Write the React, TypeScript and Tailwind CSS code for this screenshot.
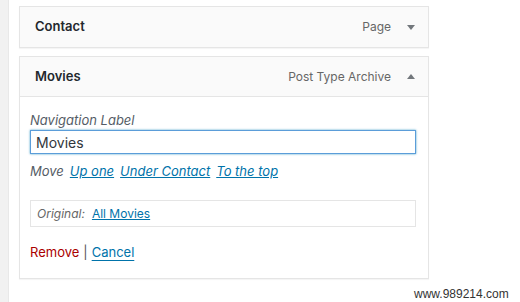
import React from "react";

const Arrow: React.FC<{ up?: boolean }> = ({ up }) => (
  <svg width="8" height="5" viewBox="0 0 8 5" className="text-[#72777c]">
    {up ? <path d="M0 5 L4 0 L8 5 Z" fill="currentColor" /> : <path d="M0 0 L8 0 L4 5 Z" fill="currentColor" />}
  </svg>
);

const ItemHeader: React.FC<{ title: string; type: string; up?: boolean; open?: boolean }> = ({
  title,
  type,
  up,
  open,
}) => (
  <div
    className={`flex items-center h-[40px] pl-[15px] pr-[13px] bg-[#fafafa] ${
      open ? "border-b border-[#e5e5e5]" : ""
    }`}
  >
    <span className="text-[13px] font-semibold text-[#23282d]">{title}</span>
    <span className="ml-auto text-[12px] text-[#666]">{type}</span>
    <span className="ml-[16px] w-[8px] flex items-center">
      <Arrow up={up} />
    </span>
  </div>
);

const App: React.FC = () => {
  return (
    <div
      className="relative flex w-[520px] h-[302px] bg-white overflow-hidden"
      style={{ fontFamily: "Inter, 'Noto Sans', sans-serif" }}
    >
      {/* left admin strip */}
      <div className="w-[9px] h-full bg-[#f1f1f1] border-r border-[#e8e8e8]" />

      <div className="flex flex-col pl-[10px] pt-[6px] w-[420px]">
        {/* Contact item */}
        <div className="border border-[#e5e5e5] shadow-[0_1px_1px_rgba(0,0,0,0.04)]">
          <ItemHeader title="Contact" type="Page" />
        </div>

        {/* Movies item */}
        <div className="mt-[8px] border border-[#e5e5e5] shadow-[0_1px_1px_rgba(0,0,0,0.04)] bg-white">
          <ItemHeader title="Movies" type="Post Type Archive" up open />

          <div className="pl-[10px] pr-[12px] pt-[15px] pb-[17px]">
            <div className="text-[13px] italic text-[#555d66] leading-[16px]">Navigation Label</div>
            <input
              readOnly
              value="Movies"
              className="mt-[2px] w-full h-[24px] px-[5px] text-[14px] text-[#32373c] border border-[#5b9dd9] shadow-[0_0_2px_rgba(30,140,190,0.8)] outline-none"
            />
            <div className="mt-[9px] flex items-center gap-[6px] text-[13px] italic leading-[16px]">
              <span className="text-[#555d66]">Move</span>
              <a href="#" className="text-[#0073aa] underline">
                Up one
              </a>
              <a href="#" className="text-[#0073aa] underline">
                Under Contact
              </a>
              <a href="#" className="text-[#0073aa] underline">
                To the top
              </a>
            </div>

            <div className="mt-[21px] h-[27px] flex items-center px-[6px] border border-[#e5e5e5] text-[12px] leading-[16px]">
              <span className="italic text-[#666]">Original:</span>
              <a href="#" className="ml-[7px] text-[#0073aa] underline">
                All Movies
              </a>
            </div>

            <div className="mt-[16px] flex items-center text-[13px] leading-[18px]">
              <a href="#" className="text-[#a00]">
                Remove
              </a>
              <span className="mx-[4px] text-[#555]">|</span>
              <a href="#" className="text-[#0073aa] underline underline-offset-[3px]">
                Cancel
              </a>
            </div>
          </div>
        </div>
      </div>

      {/* watermark */}
      <div
        className="absolute left-[414px] top-[285px] text-[12px] text-[#333]"
        style={{ fontFamily: "'Liberation Sans', Arial, sans-serif" }}
      >
        www.989214.com
      </div>
    </div>
  );
};

export default App;
